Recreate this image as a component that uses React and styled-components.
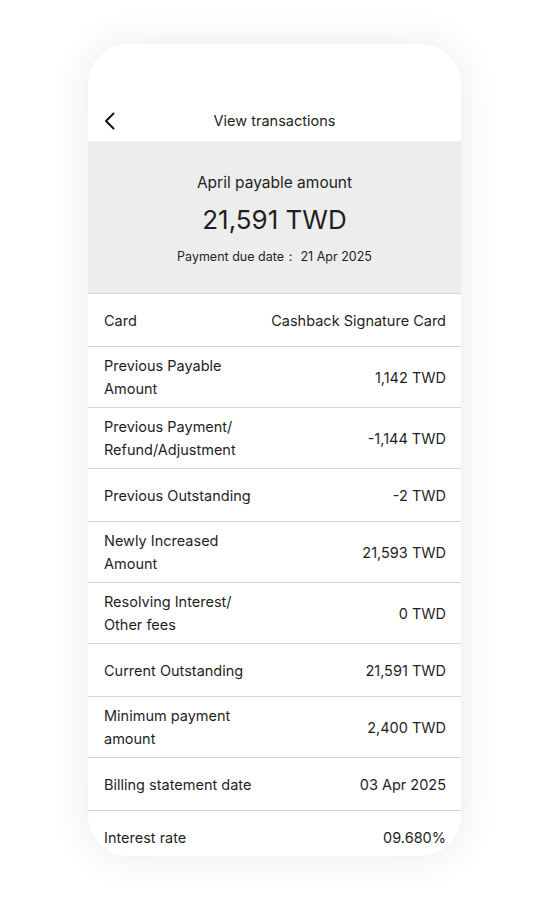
import React from "react"
import styled, { createGlobalStyle } from "styled-components"

const GlobalStyle = createGlobalStyle`
  html, body {
    margin: 0;
    padding: 0;
    background: #ffffff;
  }
  body {
    font-family: Inter, "Noto Sans", "Liberation Sans", sans-serif;
    color: #1f1f1f;
  }
`

const Page = styled.div`
  display: flex;
  justify-content: center;
  padding-top: 44px;
  height: 900px;
  box-sizing: border-box;
`

const Phone = styled.div`
  width: 373px;
  height: 812px;
  border-radius: 40px;
  background: #ffffff;
  box-shadow: 0 0 40px rgba(0, 0, 0, 0.09);
  overflow: hidden;
  display: flex;
  flex-direction: column;

  & > * {
    flex-shrink: 0;
  }
`

const NavBar = styled.header`
  height: 97px;
  box-sizing: border-box;
  padding: 0 16px 8px;
  display: grid;
  grid-template-columns: 32px 1fr 32px;
  align-items: end;
`

const BackButton = styled.button`
  border: 0;
  background: none;
  padding: 0;
  width: 24px;
  height: 24px;
  display: flex;
  align-items: center;
  color: #111;
`

const NavTitle = styled.h1`
  margin: 0;
  font-size: 14.5px;
  font-weight: 400;
  text-align: center;
  line-height: 24px;
`

const Summary = styled.section`
  background: #ededed;
  border-bottom: 1.5px solid #d6d6d6;
  height: 153px;
  box-sizing: border-box;
  display: flex;
  flex-direction: column;
  align-items: center;
  padding-top: 31px;
`

const SummaryLabel = styled.p`
  margin: 0;
  font-size: 15.5px;
  line-height: 22px;
`

const Amount = styled.p`
  margin: 10px 0 0;
  font-size: 26px;
  line-height: 32px;
  font-weight: 400;
`

const DueDate = styled.p`
  margin: 12px 0 0;
  font-size: 12.5px;
  line-height: 18px;
`

const List = styled.ul`
  list-style: none;
  margin: 0;
  padding: 0;
`

const Row = styled.li`
  display: flex;
  justify-content: space-between;
  align-items: center;
  min-height: 53px;
  box-sizing: border-box;
  padding: 7px 15px 7px 16px;
  border-bottom: 1.5px solid #d6d6d6;
  font-size: 14.5px;
  line-height: 23px;
`

const Label = styled.span`
  display: flex;
  flex-direction: column;
`

const Value = styled.span`
  text-align: right;
`

const rows = [
  { label: ["Card"], value: "Cashback Signature Card" },
  { label: ["Previous Payable", "Amount"], value: "1,142 TWD" },
  { label: ["Previous Payment/", "Refund/Adjustment"], value: "-1,144 TWD" },
  { label: ["Previous Outstanding"], value: "-2 TWD" },
  { label: ["Newly Increased", "Amount"], value: "21,593 TWD" },
  { label: ["Resolving Interest/", "Other fees"], value: "0 TWD" },
  { label: ["Current Outstanding"], value: "21,591 TWD" },
  { label: ["Minimum payment", "amount"], value: "2,400 TWD" },
  { label: ["Billing statement date"], value: "03 Apr 2025" },
  { label: ["Interest rate"], value: "09.680%" },
]

const ChevronLeft = () => (
  <svg width="12" height="18" viewBox="0 0 12 18" fill="none">
    <path d="M9.5 1.5L2 9l7.5 7.5" stroke="currentColor" strokeWidth="2" strokeLinecap="round" strokeLinejoin="round" />
  </svg>
)

const App = () => {
  return (
    <Page>
      <GlobalStyle />
      <Phone>
        <NavBar>
          <BackButton aria-label="Back">
            <ChevronLeft />
          </BackButton>
          <NavTitle>View transactions</NavTitle>
          <span />
        </NavBar>
        <Summary>
          <SummaryLabel>April payable amount</SummaryLabel>
          <Amount>21,591 TWD</Amount>
          <DueDate>Payment due date： 21 Apr 2025</DueDate>
        </Summary>
        <List>
          {rows.map((row, index) => (
            <Row key={index}>
              <Label>
                {row.label.map((line) => (
                  <span key={line}>{line}</span>
                ))}
              </Label>
              <Value>{row.value}</Value>
            </Row>
          ))}
        </List>
      </Phone>
    </Page>
  )
}

export default App
